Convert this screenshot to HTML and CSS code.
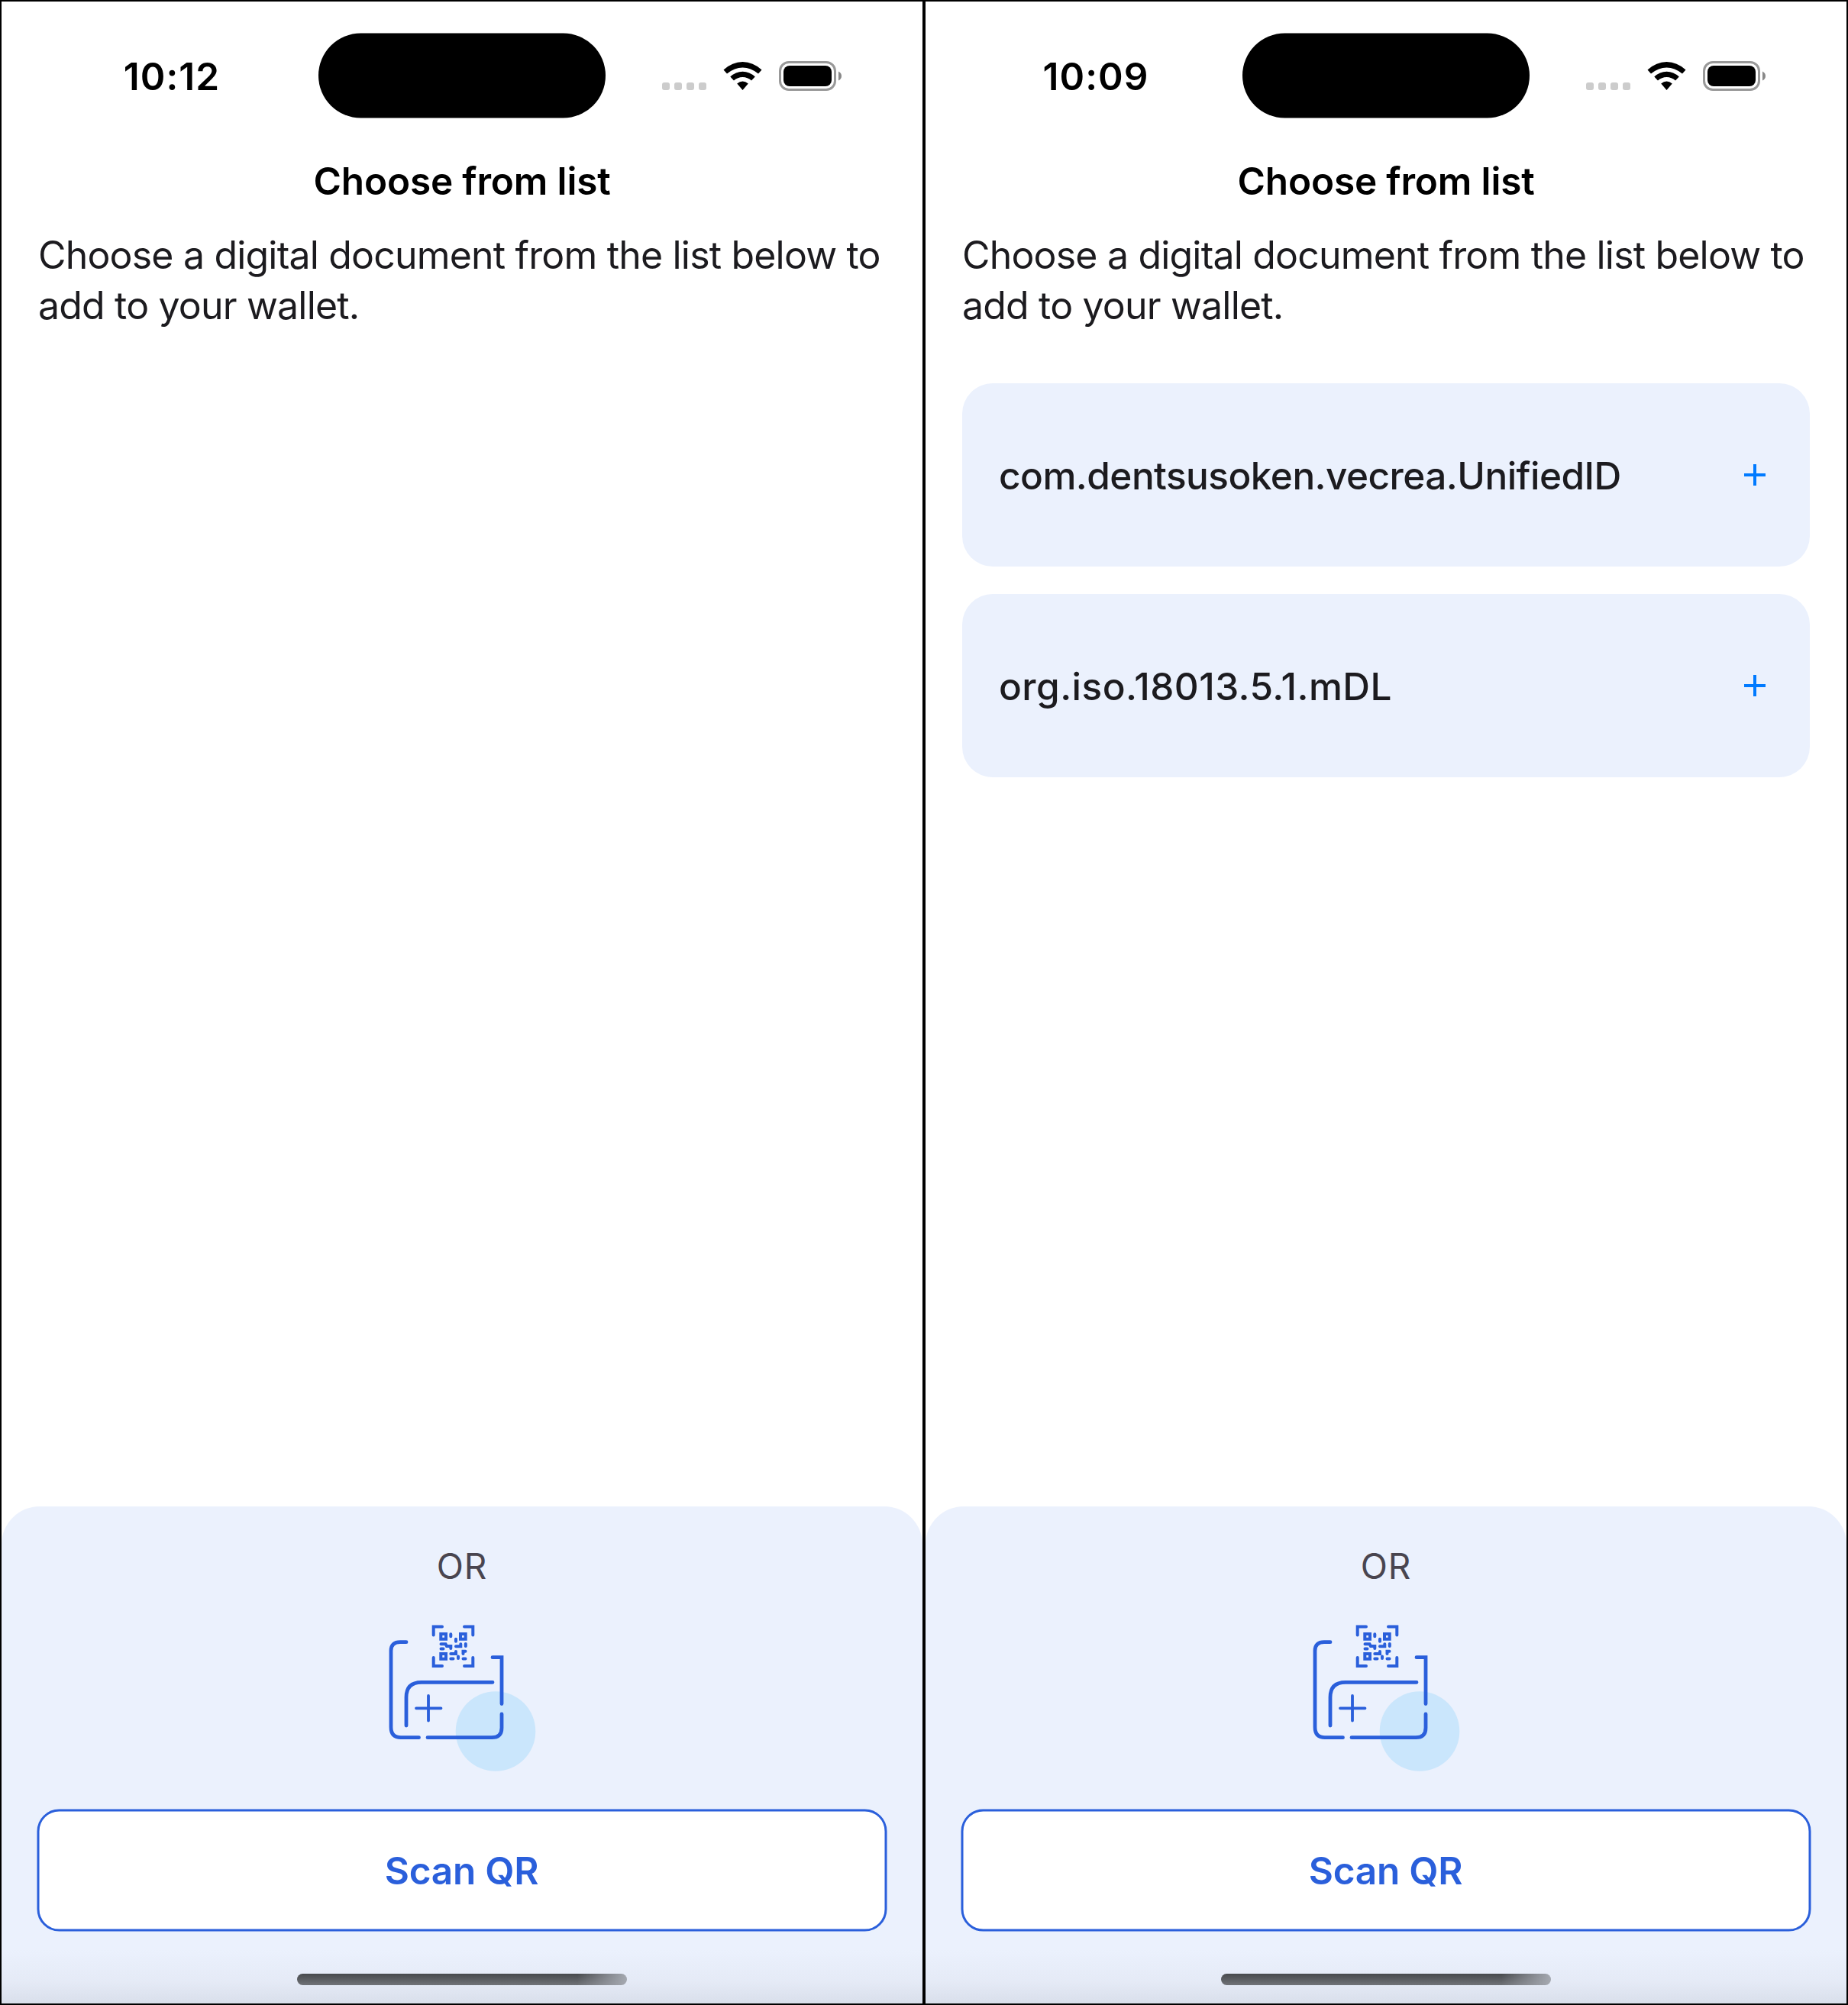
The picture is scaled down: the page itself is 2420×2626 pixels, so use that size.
FILE: index.html
```
<!DOCTYPE html>
<html lang="en">
<head>
<meta charset="utf-8">
<title>Choose from list</title>
<link rel="stylesheet" href="styles.css">
</head>
<body>
<svg class="defs" width="0" height="0" aria-hidden="true">
  <symbol id="status" viewBox="0 0 240 40">
    <g fill="#ccc"><rect x="0" y="28" width="10" height="10" rx="3"/><rect x="16" y="28" width="10" height="10" rx="3"/><rect x="32" y="28" width="10" height="10" rx="3"/><rect x="48" y="28" width="10" height="10" rx="3"/></g>
    <path d="M80.500 11.500Q92 1 105.500 1T130.500 11.500L126 16.500Q116 8.500 105.500 8.500T85 16.500ZM89.300 20.500Q96.500 13.700 105.500 13.700T121.800 20.500L117 25.500Q112 21 105.500 21T94 25.500ZM98.200 29.500Q105.500 23.700 112.800 29.500L105.500 38Z"/>
    <rect x="154.500" y="1.500" width="72" height="36" rx="11.500" fill="none" stroke="#999" stroke-width="3"/>
    <rect x="159" y="6" width="63" height="27" rx="8"/>
    <path d="M231 13.500Q235 15.500 235 19.500T231 25.500Z" fill="#888"/>
  </symbol>
  <symbol id="scan" viewBox="0 0 260 240">
    <circle cx="169" cy="167.500" r="52.300" fill="#cae6fc"/>
    <g fill="none" stroke="#2a5fdb" stroke-linecap="round" stroke-linejoin="miter">
      <path stroke-width="4.800" d="M52 50.700H44Q32 50.700 32 62V162Q32 175.700 45 175.700H68.500M80 175.700H164Q177 175.700 177 163V145M177 131.500V70.700H165M52 160V123Q52 103.300 72 103.300H165"/>
      <path stroke-width="3.800" d="M65 137.300H97.500M81 121V153.500"/>
      <path stroke-width="4" d="M87.700 41.500V30.600H99M128 30.600H139.300V41.500M139.300 71V82H128M99 82H87.700V71"/>
      <path stroke-width="4" d="M97.300 40.100H104V46.800H97.300ZM123 40.100H129.700V46.800H123ZM97.300 66H104V72.700H97.300Z"/>
      <path stroke-width="4" d="M110.300 40.300V43.300M117 46.800V49.800M97.500 53.200H103.500L105 56H110.300V59M97.500 59.600H100.500M117 56.200H123.300V53.200M129.800 53V56M117 63V66H110.300M126.500 66V62.700H129.500M110.300 72.400H113.500M120 69.500V72M126.500 72.400H129.500"/>
    </g>
  </symbol>
</svg>

<main class="screens">
  <section class="phone">
    <header class="statusbar">
      <span class="clock">10:12</span>
      <span class="island"></span>
      <svg class="indicators"><use href="#status"/></svg>
    </header>
    <h1 class="title">Choose from list</h1>
    <p class="intro">Choose a digital document from the list below to<br>add to your wallet.</p>
    <div class="list"></div>
    <footer class="sheet">
      <span class="or">OR</span>
      <svg class="scan-art"><use href="#scan"/></svg>
      <button class="scan"><span>Scan QR</span></button>
      <span class="home"></span>
    </footer>
  </section>
  <section class="phone">
    <header class="statusbar">
      <span class="clock">10:09</span>
      <span class="island"></span>
      <svg class="indicators"><use href="#status"/></svg>
    </header>
    <h1 class="title">Choose from list</h1>
    <p class="intro">Choose a digital document from the list below to<br>add to your wallet.</p>
    <div class="list">
      <div class="card"><span class="doc-name">com.dentsusoken.vecrea.UnifiedID</span><svg class="plus" viewBox="0 0 28 28"><path d="M14 0V28M0 14H28"/></svg></div>
      <div class="card"><span class="doc-name numeric">org.iso.18013.5.1.mDL</span><svg class="plus" viewBox="0 0 28 28"><path d="M14 0V28M0 14H28"/></svg></div>
    </div>
    <footer class="sheet">
      <span class="or">OR</span>
      <svg class="scan-art"><use href="#scan"/></svg>
      <button class="scan"><span>Scan QR</span></button>
      <span class="home"></span>
    </footer>
  </section>
</main>
</body>
</html>
```
FILE: styles.css
```
* { box-sizing: border-box; }
body { margin: 0; background: #000; font-family: Inter, "Liberation Sans", sans-serif; font-size: 49.5px; color: #1c1b1f; }
.defs { display: block; height: 0; }
.screens { display: flex; gap: 4px; width: 2420px; height: 2626px; padding: 2px; }
.phone { display: flex; flex-direction: column; width: 1206px; height: 2622px; background: #fff; }
.statusbar { display: grid; grid-template-columns: 414px 378px 414px; height: 194px; padding-top: 41px; }
.clock { padding-top: 27px; padding-left: 32px; text-align: center; line-height: 60px; font-weight: 600; color: #000; letter-spacing: 1.1px; }
.island { width: 376px; height: 111px; margin-left: 1px; border-radius: 56px; background: #000; transform: translateY(.5px); }
.indicators { width: 240px; height: 40px; margin: 37px 0 0 73px; }
.title { margin: 0; height: 80px; line-height: 82px; text-align: center; font-size: 49.5px; font-weight: 600; color: #000; letter-spacing: -.15px; }
.intro { margin: 25px 0 0; padding-left: 48px; line-height: 66px; white-space: nowrap; font-size: 50px; letter-spacing: -.82px; }
.list { display: flex; flex-direction: column; gap: 36px; flex: 1; padding: 69px 48px 0; }
.card { display: flex; align-items: center; justify-content: space-between; height: 240px; padding: 0 58px 0 48px; border-radius: 40px; background: #ebf1fd; font-weight: 500; }
.doc-name { padding-top: 1px; letter-spacing: -.54px; }
.doc-name.numeric { letter-spacing: .46px; }
.plus { width: 28px; height: 28px; fill: none; stroke: #007aff; stroke-width: 4; }
.sheet { display: flex; flex-direction: column; align-items: center; height: 651px; padding-top: 48px; border-radius: 50px 50px 0 0; background: linear-gradient(to bottom, rgba(218,223,235,0) 580px, rgba(225,230,242,.6) 622px, #d9dfeb 651px), #ebf1fd; }
.or { line-height: 60px; font-size: 46px; letter-spacing: .8px; color: #49454f; }
.scan-art { width: 260px; height: 240px; margin: 19px 0 0 10px; }
.scan { width: 1113px; height: 160px; margin: 29px 0 0; padding: 0; border: 3px solid #2a5fdb; border-radius: 29px; background: #fff; transform: translate(-.5px, .5px); font: inherit; font-weight: 600; color: #2a5fdb; letter-spacing: -.25px; }
.home { width: 432px; height: 15px; margin-top: 56px; border-radius: 8px; background: linear-gradient(to right, rgba(165,169,177,0) 85%, #a5a9b1), linear-gradient(to bottom, #47494c, #707378); }
```
